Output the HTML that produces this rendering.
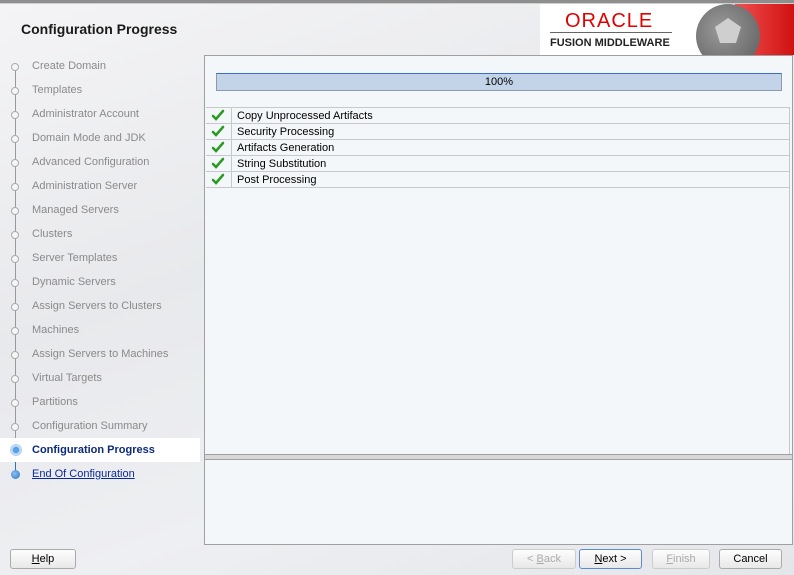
<!DOCTYPE html>
<html><head><style>
body{margin:0;width:794px;height:575px;overflow:hidden;font-family:"Liberation Sans",sans-serif;font-size:11px;background:linear-gradient(160deg,#f4f4f6 0%,#e8e9ec 40%,#eeeff2 70%,#e4e6ea 100%);position:relative}
.abs{position:absolute}
.nav{left:32px;color:#8a8a8a;font-size:11px}
.dot{left:11px;width:8px;height:8px;border-radius:50%;border:1px solid #aaa;background:#f6f6f6;box-sizing:border-box}
.row{left:206px;width:584px;height:16px;border-bottom:1px solid #c8c8c8;box-sizing:border-box}
.row .ic{position:absolute;left:0;top:0;width:25px;height:15px;border-right:1px solid #c8c8c8}
.row .t{position:absolute;left:31px;top:2px;color:#000}
.btn{height:20px;border:1px solid #aaa;border-radius:3px;background:linear-gradient(#fdfdfd,#e8e8e8);box-sizing:border-box;text-align:center;line-height:18px;font-size:11px;top:549px}
</style></head><body>
<div class="abs" style="left:0;top:0;width:794px;height:3px;background:#8e8e8e"></div>
<div class="abs" style="left:0;top:3px;width:794px;height:1px;background:#d0d0d0"></div>
<div class="abs" style="left:21px;top:21px;font-size:14px;font-weight:bold;color:#1a1a1a">Configuration Progress</div>
<div class="abs" style="left:540px;top:4px;width:254px;height:51px;background:#fff"></div>
<div class="abs" style="left:735px;top:4px;width:59px;height:51px;background:linear-gradient(90deg,#f05050,#d01010)"></div>
<div class="abs" style="left:696px;top:4px;width:64px;height:64px;border-radius:50%;background:radial-gradient(circle at 40% 40%,#9a9a9a,#5a5a5a);clip-path:inset(0 0 13px 0)"></div>
<svg class="abs" style="left:713px;top:16px" width="30" height="30"><polygon points="15,2 28,11 23,27 7,27 2,11" fill="#cfcfcf"/></svg>
<div class="abs" style="left:565px;top:10px;font-size:20px;color:#e00000;letter-spacing:1px">ORACLE</div>
<div class="abs" style="left:550px;top:32px;width:122px;height:1px;background:#666"></div>
<div class="abs" style="left:550px;top:37px;font-size:11px;font-weight:bold;color:#222">FUSION MIDDLEWARE</div>
<div class="abs" style="left:15px;top:70px;width:1px;height:404px;background:#999"></div>
<div class="abs" style="left:15px;top:452px;width:1px;height:22px;background:#3a6bb8"></div>
<div class="abs" style="left:0;top:438px;width:200px;height:24px;background:#fff"></div>
<div class="abs nav" style="top:60px">Create Domain</div>
<div class="abs nav" style="top:84px">Templates</div>
<div class="abs nav" style="top:108px">Administrator Account</div>
<div class="abs nav" style="top:132px">Domain Mode and JDK</div>
<div class="abs nav" style="top:156px">Advanced Configuration</div>
<div class="abs nav" style="top:180px">Administration Server</div>
<div class="abs nav" style="top:204px">Managed Servers</div>
<div class="abs nav" style="top:228px">Clusters</div>
<div class="abs nav" style="top:252px">Server Templates</div>
<div class="abs nav" style="top:276px">Dynamic Servers</div>
<div class="abs nav" style="top:300px">Assign Servers to Clusters</div>
<div class="abs nav" style="top:324px">Machines</div>
<div class="abs nav" style="top:348px">Assign Servers to Machines</div>
<div class="abs nav" style="top:372px">Virtual Targets</div>
<div class="abs nav" style="top:396px">Partitions</div>
<div class="abs nav" style="top:420px">Configuration Summary</div>
<div class="abs nav" style="top:444px;color:#0a2a7a;font-weight:bold">Configuration Progress</div>
<div class="abs nav" style="top:468px;color:#0a2a9a;text-decoration:underline">End Of Configuration</div>
<div class="abs dot" style="top:63px"></div><div class="abs dot" style="top:87px"></div>
<div class="abs dot" style="top:111px"></div><div class="abs dot" style="top:135px"></div>
<div class="abs dot" style="top:159px"></div><div class="abs dot" style="top:183px"></div>
<div class="abs dot" style="top:207px"></div><div class="abs dot" style="top:231px"></div>
<div class="abs dot" style="top:255px"></div><div class="abs dot" style="top:279px"></div>
<div class="abs dot" style="top:303px"></div><div class="abs dot" style="top:327px"></div>
<div class="abs dot" style="top:351px"></div><div class="abs dot" style="top:375px"></div>
<div class="abs dot" style="top:399px"></div><div class="abs dot" style="top:423px"></div>
<div class="abs" style="left:10px;top:444px;width:12px;height:12px;border-radius:50%;background:radial-gradient(circle,#5aa0e8 35%,#cfe2f8 45%,#8ab4e0 100%)"></div>
<div class="abs" style="left:11px;top:470px;width:9px;height:9px;border-radius:50%;background:radial-gradient(circle at 40% 40%,#8cc0f0,#2a70c8)"></div>
<div class="abs" style="left:204px;top:55px;width:589px;height:490px;background:#f4f7f9;border:1px solid #a0a0a0;box-sizing:border-box"></div>
<div class="abs" style="left:216px;top:73px;width:566px;height:18px;background:#c3d3e8;border:1px solid #8a9ab0;border-top:1px solid #3a6bd0;box-sizing:border-box;text-align:center;line-height:17px">100%</div>
<div class="abs" style="left:206px;top:107px;width:584px;height:1px;background:#c8c8c8"></div>
<div class="abs" style="left:789px;top:107px;width:1px;height:347px;background:#c8c8c8"></div>
<div class="abs row" style="top:108px"><div class="ic"></div><div class="t">Copy Unprocessed Artifacts</div></div>
<div class="abs row" style="top:124px"><div class="ic"></div><div class="t">Security Processing</div></div>
<div class="abs row" style="top:140px"><div class="ic"></div><div class="t">Artifacts Generation</div></div>
<div class="abs row" style="top:156px"><div class="ic"></div><div class="t">String Substitution</div></div>
<div class="abs row" style="top:172px"><div class="ic"></div><div class="t">Post Processing</div></div>
<svg class="abs" style="left:211px;top:108px" width="14" height="80">
<g fill="none" stroke="#2a9a20" stroke-width="2.5" stroke-linecap="round"><path d="M2 8l3 3 7-8"/><path d="M2 24l3 3 7-8"/><path d="M2 40l3 3 7-8"/><path d="M2 56l3 3 7-8"/><path d="M2 72l3 3 7-8"/></g></svg>
<div class="abs" style="left:205px;top:454px;width:587px;height:4px;background:#d8d8d8;border-top:1px solid #a0a0a0;border-bottom:1px solid #a0a0a0"></div>
<div class="abs btn" style="left:10px;width:66px"><u>H</u>elp</div>
<div class="abs btn" style="left:512px;width:64px;color:#aaa;border-color:#ccc">&lt; <u>B</u>ack</div>
<div class="abs btn" style="left:579px;width:63px;border-color:#5a8ad0"><u>N</u>ext &gt;</div>
<div class="abs btn" style="left:652px;width:58px;color:#aaa;border-color:#ccc"><u>F</u>inish</div>
<div class="abs btn" style="left:719px;width:63px">Cancel</div>
</body></html>
